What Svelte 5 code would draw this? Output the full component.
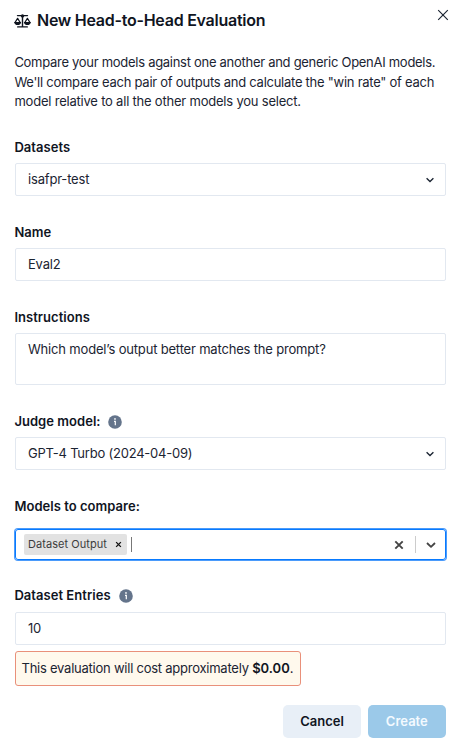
{#snippet info()}
  <svg class="info" viewBox="0 0 14 14" aria-hidden="true">
    <circle cx="7" cy="7" r="6.800" fill="#64748b" />
    <path d="M6 6.300h1.300v4" fill="none" stroke="#fff" stroke-width="1.200" />
    <circle cx="7" cy="3.900" r=".85" fill="#fff" />
  </svg>
{/snippet}

{#snippet chevron()}
  <svg class="chevron" viewBox="0 0 10 10" aria-hidden="true">
    <path d="M1.600 3.200 5 6.500 8.400 3.200" fill="none" stroke="currentColor" stroke-width="1.350" />
  </svg>
{/snippet}

<main>
  <header>
    <svg class="scale" viewBox="0 0 17 14" aria-hidden="true">
      <g fill="none" stroke="currentColor" stroke-width="1.400" stroke-linecap="round" stroke-linejoin="round">
        <path d="M3.500 1.600h10M8.500 2v10.800M3.700 12.900h9.600" />
        <path d="M1 8.500 3.600 4.400 6.200 8.500M10.800 8.500 13.400 4.400 16 8.500" stroke-width="1.250" />
      </g>
      <circle cx="8.500" cy="1.900" r="1.700" fill="currentColor" />
      <path d="M.200 8h6.900c0 2-1.500 3.100-3.400 3.100S.200 10 .200 8zM9.900 8h6.900c0 2-1.500 3.100-3.400 3.100s-3.500-1.100-3.500-3.100z" fill="currentColor" />
    </svg>
    <h1>New Head-to-Head Evaluation</h1>
    <button class="close" aria-label="Close">
      <svg viewBox="0 0 12 12"><path d="M1.200 1.200 10.800 10.800M10.800 1.200 1.200 10.800" fill="none" stroke="currentColor" stroke-width="1.150" /></svg>
    </button>
  </header>

  <p class="intro">
    <span>Compare your models against one another and generic OpenAI models.</span><br />
    <span class="second">We'll compare each pair of outputs and calculate the "win rate" of each</span><br />
    <span class="third">model relative to all the other models you select.</span>
  </p>

  <section>
    <h2>Datasets</h2>
    <div class="field"><span>isafpr-test</span>{@render chevron()}</div>
  </section>
  <section>
    <h2>Name</h2>
    <div class="field"><span>Eval2</span></div>
  </section>
  <section>
    <h2>Instructions</h2>
    <div class="field area"><span>Which model’s output better matches the prompt?</span></div>
  </section>
  <section>
    <h2>Judge model: {@render info()}</h2>
    <div class="field judge"><span>GPT-4 Turbo (2024-04-09)</span>{@render chevron()}</div>
  </section>
  <section class="models">
    <h2>Models to compare:</h2>
    <div class="multi">
      <div class="chip">
        <span>Dataset Output</span>
        <svg viewBox="0 0 8 8"><path d="M1.300 1.300 6.700 6.700M6.700 1.300 1.300 6.700" stroke="#111" stroke-width="1.500" /></svg>
      </div>
      <i class="caret"></i>
      <svg class="clear" viewBox="0 0 10 10"><path d="M1.300 1.300 8.700 8.700M8.700 1.300 1.300 8.700" stroke="#444" stroke-width="1.900" /></svg>
      <i class="divider"></i>
      <svg class="open" viewBox="0 0 10 10"><path d="M1 3 5 6.900 9 3" fill="none" stroke="#444" stroke-width="1.800" stroke-linejoin="round" /></svg>
    </div>
  </section>
  <section class="entries">
    <h2>Dataset Entries {@render info()}</h2>
    <div class="field"><span>10</span></div>
  </section>

  <p class="cost"><span>This evaluation will cost approximately <b>$0.00</b>.</span></p>

  <footer>
    <button>Cancel</button>
    <button class="create">Create</button>
  </footer>
</main>

<style>
  :global(body) { background: #fff; }
  main {
    box-sizing: border-box;
    width: 464px;
    height: 750px;
    padding: 10px 18px 0 14.400px;
    overflow: hidden;
    font: 13px/19.500px Inter, "Open Sans", sans-serif;
    color: #1b2432;
  }
  svg { display: block; flex: none; }
  h1, h2, p { margin: 0; }
  header { display: flex; align-items: center; height: 21px; color: #10151f; }
  .scale { width: 17px; height: 14px; margin-right: 5.600px; }
  h1 { font-size: 16px; line-height: 21px; font-weight: 600; letter-spacing: -.25px; white-space: nowrap; }
  .close {
    width: 12px; height: 12px; padding: 0; margin: -11px -3px 0 auto;
    background: none; color: #1b2432;
  }
  .close svg { width: 12px; height: 12px; }
  .intro { margin-top: 22px; white-space: nowrap; letter-spacing: -.285px; }
  .second { letter-spacing: -.26px; }
  .third { letter-spacing: -.21px; }
  section { margin-top: 27px; }
  .intro + section { margin-top: 26.500px; }
  h2 {
    display: flex; align-items: center; gap: 7.600px;
    height: 19px; margin-bottom: 6px;
    font-size: 13px; line-height: 19px; font-weight: 600; letter-spacing: .04px; color: #10151f;
  }
  .info { width: 14px; height: 14px; }
  .field {
    display: flex; align-items: center; justify-content: space-between;
    box-sizing: border-box; height: 33px; margin-left: .6px; padding: 0 10.500px 0 12px;
    border: 1px solid #e2e8f0; border-radius: 2px; white-space: nowrap;
    letter-spacing: -.18px;
  }
  .judge { padding-top: 1px; letter-spacing: -.22px; }
  .area { height: 52px; align-items: flex-start; padding-top: 6px; }
  .chevron { width: 10px; height: 10px; color: #1b2432; }
  .models h2 { margin-bottom: 13px; }
  .multi {
    display: flex; align-items: center; box-sizing: border-box;
    height: 31px; margin: 0 0 1px .6px; padding: 0 9.500px 0 8px;
    border: 1px solid #087aff; border-radius: 3px; box-shadow: 0 0 0 1px #4b9bfb;
  }
  .chip {
    display: flex; align-items: center; gap: 8.500px; height: 21px; padding: 0 5px 0 4px;
    border-radius: 2px; background: #e2e2e2; color: #3c3c3c; font-size: 11px; letter-spacing: .05px;
  }
  .chip svg { width: 7px; height: 7px; }
  .caret { width: 1px; height: 15px; margin-left: 3.500px; background: #777; }
  .clear { width: 10px; height: 10px; margin-left: auto; }
  .divider { width: 1px; height: 17px; margin: 0 10px 0 10.500px; background: #ccc; }
  .open { width: 10px; height: 10px; }
  .entries { margin-top: 26px; }
  .entries h2 { margin-bottom: 7px; gap: 8.200px; }
  .cost {
    display: flex; align-items: center; box-sizing: border-box;
    width: 286px; height: 35px; margin: 6px 0 0 .6px; padding-left: 5.500px;
    border: 1px solid #e9907a; border-radius: 3px; background: #fff9ed; white-space: nowrap;
    letter-spacing: -.24px;
  }
  b { font-weight: 600; letter-spacing: 0; color: #10151f; }
  footer { display: flex; justify-content: flex-end; gap: 6.400px; margin-top: 19px; }
  button {
    width: 78.400px; height: 33px; padding: 0; border: 0; border-radius: 5px;
    font: 600 13px/19px Inter, sans-serif; background: #e8eff7; color: #10151f;
  }
  .create { background: #9bc9e9; color: #f4faff; }
</style>
